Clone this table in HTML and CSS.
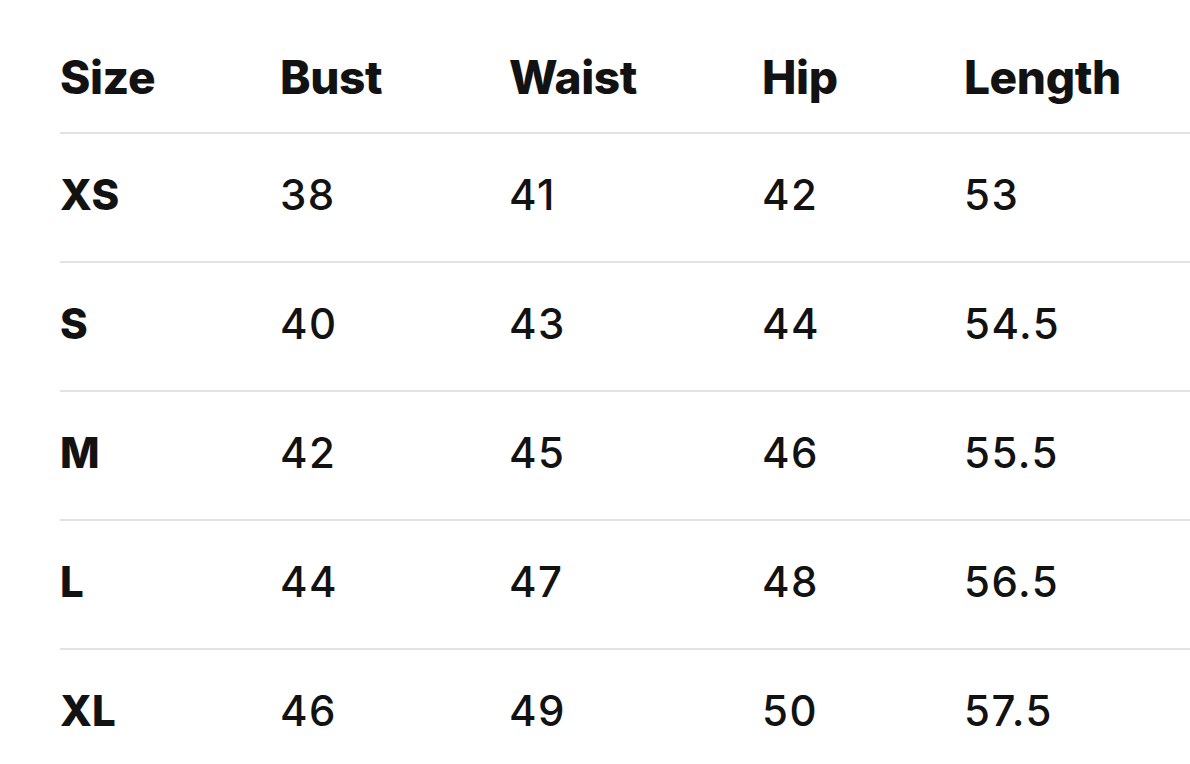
FILE: index.html
```html
<!DOCTYPE html>
<html lang="en">
<head>
<meta charset="utf-8">
<title>Size chart</title>
<link rel="stylesheet" href="styles.css">
</head>
<body>
<div class="chart">
  <div class="row head">
    <div class="cell">Size</div>
    <div class="cell">Bust</div>
    <div class="cell">Waist</div>
    <div class="cell">Hip</div>
    <div class="cell">Length</div>
  </div>
  <div class="row">
    <div class="cell label">XS</div>
    <div class="cell">38</div>
    <div class="cell">41</div>
    <div class="cell">42</div>
    <div class="cell">53</div>
  </div>
  <div class="row">
    <div class="cell label">S</div>
    <div class="cell">40</div>
    <div class="cell">43</div>
    <div class="cell">44</div>
    <div class="cell">54.5</div>
  </div>
  <div class="row">
    <div class="cell label">M</div>
    <div class="cell">42</div>
    <div class="cell">45</div>
    <div class="cell">46</div>
    <div class="cell">55.5</div>
  </div>
  <div class="row">
    <div class="cell label">L</div>
    <div class="cell">44</div>
    <div class="cell">47</div>
    <div class="cell">48</div>
    <div class="cell">56.5</div>
  </div>
  <div class="row">
    <div class="cell label">XL</div>
    <div class="cell">46</div>
    <div class="cell">49</div>
    <div class="cell">50</div>
    <div class="cell">57.5</div>
  </div>
</div>
</body>
</html>
```
FILE: styles.css
```css
html, body {
  margin: 0;
  padding: 0;
  background: #ffffff;
  overflow: hidden;
}

body {
  font-family: Inter, "Noto Sans", "Liberation Sans", sans-serif;
  color: #121212;
}

.chart {
  padding-left: 60px;
}

.row {
  display: grid;
  grid-template-columns: 220px 229px 253px 202px 1fr;
  box-sizing: border-box;
  height: 129px;
  padding-top: 40px;
  border-top: 2px solid #e2e2e2;
  font-size: 42px;
  line-height: 42px;
  font-weight: 500;
  letter-spacing: 1.5px;
}

.row.head {
  height: 132px;
  padding-top: 54px;
  border-top: none;
  font-size: 46px;
  line-height: 46px;
  font-weight: 800;
  letter-spacing: -0.4px;
}

.cell {
  white-space: nowrap;
}

.cell.label {
  font-weight: 800;
  letter-spacing: 0;
}
```
